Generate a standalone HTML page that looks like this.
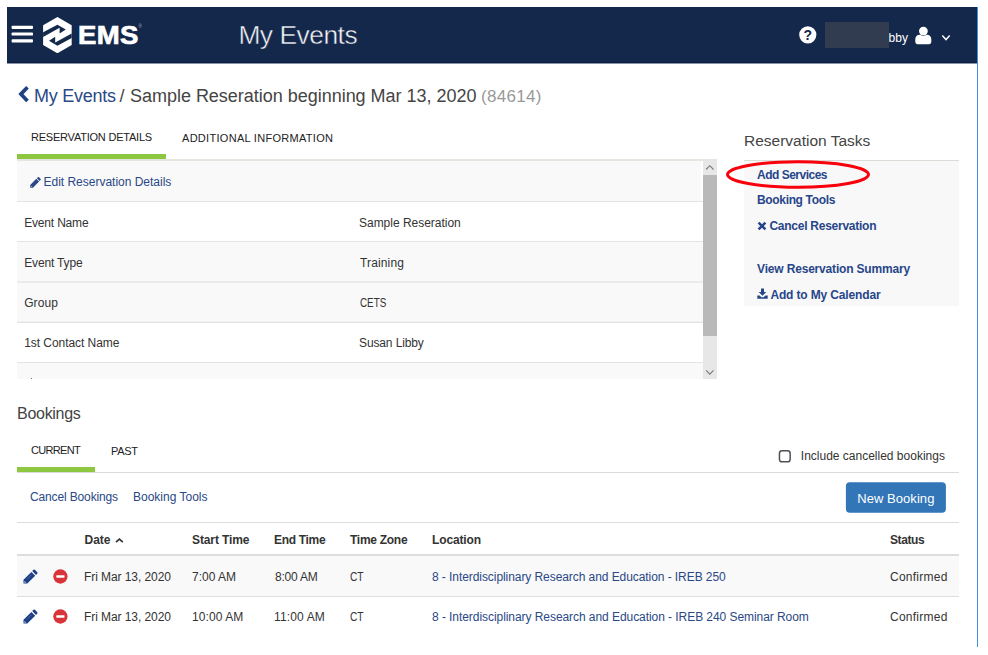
<!DOCTYPE html>
<html lang="en">
<head>
<meta charset="utf-8">
<title>My Events</title>
<style>
html,body{margin:0;padding:0;background:#fff;}
body{width:988px;height:655px;position:relative;overflow:hidden;font-family:"Liberation Sans",sans-serif;color:#333;}
.abs{position:absolute;white-space:nowrap;}
.t{position:absolute;white-space:nowrap;line-height:1;}
#hdr{left:7px;top:7px;width:970px;height:56px;background:#14284b;}
#vline{left:977px;top:7px;width:1px;height:640px;background:#3d8fdf;}
.bar{position:absolute;left:11.6px;width:21.4px;height:3.2px;border-radius:1px;background:#fff;}
a{color:#2a4886;text-decoration:none;}
.link{color:#2a4886;}
.navy{color:#27468a;}
.row{position:absolute;left:17px;width:686px;}
.hl{position:absolute;height:1px;background:#ddd;}
</style>
</head>
<body>
<!-- header -->
<div id="hdr" class="abs"></div>
<div class="abs" style="left:7px;top:62px;width:970px;height:1px;background:#0b1d43;"></div>
<div class="abs" style="left:7px;top:63px;width:970px;height:1px;background:#8a94a6;"></div>
<svg class="abs" style="left:10px;top:24px" width="26" height="21" viewBox="0 0 26 21">
  <rect x="1.6" y="1.7" width="21.4" height="3.2" rx="0.9" fill="#fff"/>
  <rect x="1.6" y="8.4" width="21.4" height="3.2" rx="0.9" fill="#fff"/>
  <rect x="1.6" y="15.2" width="21.4" height="3.3" rx="0.9" fill="#fff"/>
</svg>
<svg class="abs" style="left:43.3px;top:16.9px" width="28.8" height="36.3" viewBox="55 45 445 565">
  <polygon points="278,45 500,175 500,480 278,610 55,480 55,175" fill="#fff"/>
  <polygon points="55,284 278,164 408,239 312,302 312,214 55,355" fill="#14284b"/>
  <polygon points="500,371 277,491 147,416 243,353 243,441 500,300" fill="#14284b"/>
</svg>
<div class="t" id="ems" style="left:78.4px;top:22px;font-size:26px;font-weight:bold;color:#fff;letter-spacing:0.3px;-webkit-text-stroke:0.7px #fff;transform:scaleX(1.06);transform-origin:0 0;">EMS</div>
<div class="t" style="left:138.6px;top:24.5px;font-size:4.5px;color:#aab3c4;">®</div>
<div class="t" id="title" style="left:238.4px;top:22px;font-size:26.4px;color:#f2f4f7;letter-spacing:-0.5px;-webkit-text-stroke:0.45px #14284b;">My Events</div>
<!-- header right -->
<svg class="abs" style="left:799px;top:26px" width="18" height="18" viewBox="0 0 18 18">
  <circle cx="8.8" cy="8.8" r="8.6" fill="#fff"/>
  <text x="8.9" y="13.9" text-anchor="middle" font-family="Liberation Sans, sans-serif" font-weight="bold" font-size="14" fill="#14284b">?</text>
</svg>
<div class="t" id="bby" style="left:888.6px;top:31.5px;font-size:12px;color:#fff;">bby</div>
<div class="abs" style="left:825px;top:22px;width:64px;height:26px;background:#323c50;"></div>
<svg class="abs" style="left:915px;top:26px" width="17" height="19" viewBox="0 0 17 19">
  <path d="M2.4 18.2 Q0.3 18.2 0.3 16.1 V13.4 C0.3 10.6 2 8.8 4.6 8.8 H12 C14.6 8.8 16.3 10.6 16.3 13.4 V16.1 Q16.3 18.2 14.2 18.2 Z" fill="#fff"/>
  <circle cx="8.4" cy="5.1" r="4.9" fill="#14284b"/>
  <circle cx="8.4" cy="5.1" r="4.4" fill="#fff"/>
</svg>
<svg class="abs" style="left:941px;top:34px" width="10" height="8" viewBox="0 0 10 8">
  <path d="M1.3 1.6 L5 5.6 L8.7 1.6" fill="none" stroke="#fff" stroke-width="1.4"/>
</svg>
<div id="vline" class="abs"></div>

<!-- breadcrumb -->
<svg class="abs" style="left:17px;top:85px" width="13" height="19" viewBox="0 0 13 19">
  <path d="M10.45 2.25 L3.9 9.1 L10.45 15.95" fill="none" stroke="#1f4285" stroke-width="3.7"/>
</svg>
<div class="t link" id="bc1" style="left:34px;top:87px;font-size:18px;letter-spacing:-0.25px;">My Events</div>
<div class="t" id="bc2" style="left:119.5px;top:87px;font-size:18px;color:#444;">/</div>
<div class="t" id="bc3" style="left:130.0px;top:87px;font-size:18px;color:#444;letter-spacing:-0.02px;">Sample Reseration beginning Mar 13, 2020</div>
<div class="t" id="bc4" style="left:481.1px;top:88px;font-size:17px;color:#999;letter-spacing:0.27px;">(84614)</div>

<!-- tabs 1 -->
<div class="t" id="tab1" style="left:31.0px;top:132px;font-size:11px;color:#222;letter-spacing:-0.22px;">RESERVATION DETAILS</div>
<div class="t" id="tab2" style="left:182.0px;top:133px;font-size:11px;color:#222;letter-spacing:0.29px;">ADDITIONAL INFORMATION</div>
<div class="abs" style="left:17px;top:159px;width:700px;height:2px;background:#e6e6e1;"></div>
<div class="abs" style="left:17px;top:154px;width:149px;height:5px;background:#8dc63f;"></div>

<!-- details table -->
<div class="row" style="top:161px;height:40px;background:#f9f9f9;width:684px;"></div>
<div class="row" style="top:201px;height:1px;background:#e4e4e4;"></div>
<div class="row" style="top:241px;height:1px;background:#e4e4e4;"></div>
<div class="row" style="top:242px;height:80px;background:#f9f9f9;"></div>
<div class="row" style="top:281px;height:2px;background:#ebebeb;"></div>
<div class="row" style="top:321px;height:1px;background:#f0f0f0;"></div>
<div class="row" style="top:322px;height:1px;background:#e4e4e4;"></div>
<div class="row" style="top:362px;height:1px;background:#e4e4e4;"></div>
<div class="row" style="top:363px;height:16px;background:#f9f9f9;"></div>
<svg class="abs" style="left:29.6px;top:177px" width="11" height="11" viewBox="0 0 11 11">
  <path d="M0.2 10.7 L0.2 7.9 L6.3 1.8 L9.1 4.6 L3 10.7 Z M6.9 1.2 L7.8 0.3 Q8.4 -0.2 9 0.3 L10.5 1.8 Q11 2.4 10.5 3 L9.7 4 Z" fill="#2a4886"/>
  <path d="M1 8.9 L2 9.9" stroke="#f9f9f9" stroke-width="0.6"/>
</svg>
<div class="t link" id="edit" style="left:43.5px;top:176px;font-size:12px;letter-spacing:-0.01px;">Edit Reservation Details</div>
<div class="t" id="r1a" style="left:24.2px;top:217px;font-size:12px;letter-spacing:-0.18px;">Event Name</div>
<div class="t" id="r1b" style="left:359.0px;top:217px;font-size:12px;letter-spacing:-0.02px;">Sample Reseration</div>
<div class="t" id="r2a" style="left:24.2px;top:257px;font-size:12px;letter-spacing:-0.15px;">Event Type</div>
<div class="t" id="r2b" style="left:360.0px;top:257px;font-size:12px;letter-spacing:0.14px;">Training</div>
<div class="t" id="r3a" style="left:24.2px;top:297px;font-size:12px;letter-spacing:0.08px;">Group</div>
<div class="t" id="r3b" style="left:360.0px;top:297px;font-size:12px;transform:scaleX(0.82);transform-origin:0 0;">CETS</div>
<div class="t" id="r4a" style="left:24.2px;top:337px;font-size:12px;letter-spacing:-0.05px;">1st Contact Name</div>
<div class="t" id="r4b" style="left:359.0px;top:337px;font-size:12px;letter-spacing:-0.12px;">Susan Libby</div>
<div class="abs" style="left:31px;top:378px;width:1px;height:1px;background:#777;"></div>
<!-- scrollbar -->
<div class="abs" style="left:703px;top:161px;width:14px;height:218px;background:#e7e7e7;"></div>
<div class="abs" style="left:703px;top:175px;width:14px;height:161px;background:#b9b9b9;"></div>
<svg class="abs" style="left:703px;top:161px" width="14" height="14" viewBox="0 0 14 14">
  <path d="M3.1 8.5 L6.8 4.7 L10.5 8.5" fill="none" stroke="#7a7a7a" stroke-width="1.1"/>
</svg>
<svg class="abs" style="left:703px;top:365px" width="14" height="14" viewBox="0 0 14 14">
  <path d="M3.1 5.3 L6.8 9.1 L10.5 5.3" fill="none" stroke="#7a7a7a" stroke-width="1.1"/>
</svg>

<!-- tasks panel -->
<div class="t" id="rt" style="left:744.0px;top:133px;font-size:15.5px;color:#444;letter-spacing:-0.00px;">Reservation Tasks</div>
<div class="abs" style="left:744px;top:160px;width:215px;height:1px;background:#dcdcd6;"></div>
<div class="abs" style="left:744px;top:161px;width:215px;height:145px;background:#f8f8f8;"></div>
<div class="t navy" id="k1" style="left:757px;top:169px;font-size:12px;font-weight:bold;letter-spacing:-0.50px;">Add Services</div>
<div class="t navy" id="k2" style="left:757.0px;top:194px;font-size:12px;font-weight:bold;letter-spacing:-0.34px;">Booking Tools</div>
<svg class="abs" style="left:757px;top:221px" width="10" height="10" viewBox="0 0 10 10">
  <path d="M1.6 1.6 L8.4 8.4 M8.4 1.6 L1.6 8.4" stroke="#27468a" stroke-width="2.6" fill="none"/>
</svg>
<div class="t navy" id="k3" style="left:769.4px;top:220px;font-size:12px;font-weight:bold;letter-spacing:-0.25px;">Cancel Reservation</div>
<div class="t navy" id="k4" style="left:757.1px;top:263px;font-size:12px;font-weight:bold;letter-spacing:-0.18px;">View Reservation Summary</div>
<svg class="abs" style="left:757px;top:288px" width="11" height="11" viewBox="0 0 11 11">
  <path d="M4 0.5 H7 V4 H9.3 L5.5 7.8 L1.7 4 H4 Z" fill="#27468a"/>
  <path d="M0.3 7.6 H2.6 L4.4 9.2 H6.6 L8.4 7.6 H10.7 V10.7 H0.3 Z" fill="#27468a"/>
</svg>
<div class="t navy" id="k5" style="left:770.4px;top:289px;font-size:12px;font-weight:bold;letter-spacing:-0.14px;">Add to My Calendar</div>
<svg class="abs" style="left:724px;top:158px" width="150" height="34" viewBox="0 0 150 34">
  <ellipse cx="74" cy="16.5" rx="70.5" ry="12.8" fill="none" stroke="#f8000c" stroke-width="3"/>
</svg>

<!-- bookings -->
<div class="t" id="bk" style="left:17.0px;top:406px;font-size:16px;color:#444;letter-spacing:-0.28px;">Bookings</div>
<div class="t" id="tab3" style="left:31.0px;top:445px;font-size:11px;color:#222;letter-spacing:-0.67px;">CURRENT</div>
<div class="t" id="tab4" style="left:111.0px;top:446px;font-size:11px;color:#222;letter-spacing:-0.33px;">PAST</div>
<div class="abs" style="left:17px;top:472px;width:942px;height:1px;background:#dcdcd8;"></div>
<div class="abs" style="left:17px;top:467px;width:78px;height:5px;background:#8dc63f;"></div>
<svg class="abs" style="left:777px;top:448px" width="16" height="17" viewBox="0 0 16 17"><rect x="2.45" y="2.75" width="10.7" height="11.1" rx="2.6" fill="#fff" stroke="#505058" stroke-width="1.5"/></svg>
<div class="t" id="inc" style="left:800.8px;top:450px;font-size:12px;letter-spacing:0.00px;">Include cancelled bookings</div>
<div class="t link" id="cb" style="left:30.0px;top:491px;font-size:12px;letter-spacing:-0.14px;">Cancel Bookings</div>
<div class="t link" id="bt" style="left:133.0px;top:491px;font-size:12px;letter-spacing:0.00px;">Booking Tools</div>
<svg class="abs" style="left:844px;top:480px" width="104" height="36" viewBox="0 0 104 36"><rect x="1.9" y="2.3" width="100" height="30.4" rx="4" fill="#3276b8"/></svg>
<div class="t" id="nb" style="left:857.2px;top:491.5px;font-size:13px;color:#fff;letter-spacing:0.06px;">New Booking</div>

<div class="abs" style="left:17px;top:522px;width:942px;height:1px;background:#ddd;"></div>
<div class="abs" style="left:17px;top:554px;width:942px;height:2px;background:#ddd;"></div>
<div class="abs" style="left:17px;top:556px;width:942px;height:40px;background:#f9f9f9;"></div>
<div class="abs" style="left:17px;top:596px;width:942px;height:1px;background:#ddd;"></div>

<div class="t" id="h1" style="left:84.5px;top:534px;font-size:12px;font-weight:bold;">Date</div>
<svg class="abs" style="left:115px;top:536px" width="9" height="8" viewBox="0 0 9 8">
  <path d="M1 6.2 L4.4 3.2 L7.8 6.2" fill="none" stroke="#333" stroke-width="1.7"/>
</svg>
<div class="t" id="h2" style="left:192.0px;top:534px;font-size:12px;font-weight:bold;letter-spacing:-0.11px;">Start Time</div>
<div class="t" id="h3" style="left:274.0px;top:534px;font-size:12px;font-weight:bold;letter-spacing:-0.32px;">End Time</div>
<div class="t" id="h4" style="left:350.0px;top:534px;font-size:12px;font-weight:bold;letter-spacing:-0.28px;">Time Zone</div>
<div class="t" id="h5" style="left:432.0px;top:534px;font-size:12px;font-weight:bold;letter-spacing:-0.14px;">Location</div>
<div class="t" id="h6" style="left:890.0px;top:534px;font-size:12px;font-weight:bold;letter-spacing:-0.40px;">Status</div>

<div class="t" id="a1" style="left:84.0px;top:571px;font-size:12px;letter-spacing:-0.07px;">Fri Mar 13, 2020</div>
<div class="t" id="a2" style="left:192.0px;top:571px;font-size:12px;letter-spacing:0.00px;">7:00 AM</div>
<div class="t" id="a3" style="left:275.0px;top:571px;font-size:12px;letter-spacing:-0.22px;">8:00 AM</div>
<div class="t" id="a4" style="left:350.0px;top:571px;font-size:12px;transform:scaleX(0.85);transform-origin:0 0;">CT</div>
<div class="t link" id="a5" style="left:432.0px;top:571px;font-size:12px;letter-spacing:-0.07px;">8 - Interdisciplinary Research and Education - IREB 250</div>
<div class="t" id="a6" style="left:890.0px;top:571px;font-size:12px;letter-spacing:0.25px;">Confirmed</div>

<div class="t" id="b1" style="left:84.0px;top:611px;font-size:12px;letter-spacing:-0.07px;">Fri Mar 13, 2020</div>
<div class="t" id="b2" style="left:192.0px;top:611px;font-size:12px;letter-spacing:0.09px;">10:00 AM</div>
<div class="t" id="b3" style="left:274.0px;top:611px;font-size:12px;letter-spacing:0.14px;">11:00 AM</div>
<div class="t" id="b4" style="left:350.0px;top:611px;font-size:12px;transform:scaleX(0.85);transform-origin:0 0;">CT</div>
<div class="t link" id="b5" style="left:432.0px;top:611px;font-size:12px;letter-spacing:-0.06px;">8 - Interdisciplinary Research and Education - IREB 240 Seminar Room</div>
<div class="t" id="b6" style="left:890.0px;top:611px;font-size:12px;letter-spacing:0.25px;">Confirmed</div>

<!-- row icons -->
<svg class="abs pen" style="left:23px;top:569px" width="15" height="15" viewBox="0 0 15 15">
  <path d="M0.5 14.6 L0.5 10.8 L8.4 2.9 L12.2 6.7 L4.3 14.6 Z M9.2 2.1 L10.5 0.8 Q11.2 0.2 11.9 0.8 L14.3 3.2 Q14.9 3.9 14.3 4.6 L13 5.9 Z" fill="#1c3f86"/>
  <path d="M1.4 13.7 L1.6 11.9 L3.2 13.5 Z" fill="#e6ecf6"/>
  <path d="M4 10.2 L8.6 5.6" stroke="#6f88b8" stroke-width="0.5" fill="none"/>
</svg>
<svg class="abs" style="left:53px;top:569px" width="15" height="15" viewBox="0 0 15 15">
  <circle cx="7.4" cy="7.5" r="7.15" fill="#d8353b"/><rect x="3.3" y="6.3" width="8.2" height="2.4" rx="0.4" fill="#fff"/>
</svg>
<svg class="abs pen" style="left:23px;top:609px" width="15" height="15" viewBox="0 0 15 15">
  <path d="M0.5 14.6 L0.5 10.8 L8.4 2.9 L12.2 6.7 L4.3 14.6 Z M9.2 2.1 L10.5 0.8 Q11.2 0.2 11.9 0.8 L14.3 3.2 Q14.9 3.9 14.3 4.6 L13 5.9 Z" fill="#1c3f86"/>
  <path d="M1.4 13.7 L1.6 11.9 L3.2 13.5 Z" fill="#e6ecf6"/>
  <path d="M4 10.2 L8.6 5.6" stroke="#6f88b8" stroke-width="0.5" fill="none"/>
</svg>
<svg class="abs" style="left:53px;top:609px" width="15" height="15" viewBox="0 0 15 15">
  <circle cx="7.4" cy="7.5" r="7.15" fill="#d8353b"/><rect x="3.3" y="6.3" width="8.2" height="2.4" rx="0.4" fill="#fff"/>
</svg>
</body>
</html>
